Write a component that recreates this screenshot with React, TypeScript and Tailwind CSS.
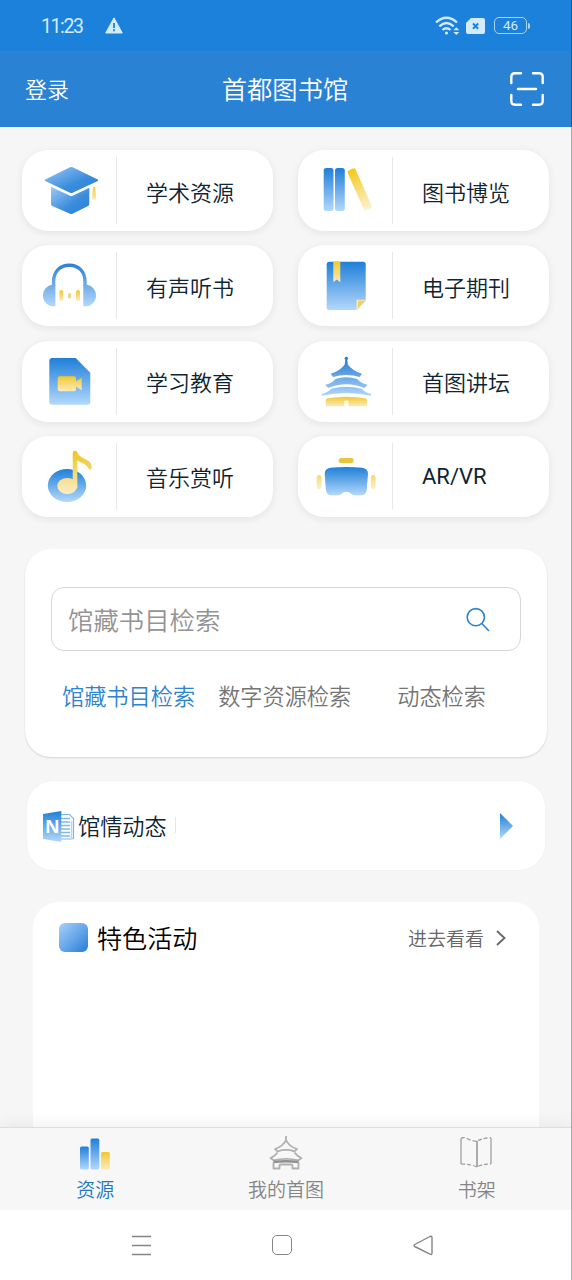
import type { ReactNode } from "react";

const Gradients = () => (
  <svg width="0" height="0" className="absolute">
    <defs>
      <linearGradient id="blue" x1="0" y1="0" x2="0" y2="1">
        <stop offset="0" stopColor="#1f7fd8" />
        <stop offset="1" stopColor="#b3d8fb" />
      </linearGradient>
      <linearGradient id="blueDown" x1="0" y1="0" x2="1" y2="1">
        <stop offset="0" stopColor="#9ccaf7" />
        <stop offset="0.6" stopColor="#3a8cdc" />
        <stop offset="1" stopColor="#2a80d6" />
      </linearGradient>
      <linearGradient id="yellow" x1="0" y1="0" x2="0" y2="1">
        <stop offset="0" stopColor="#f0c92c" />
        <stop offset="1" stopColor="#fbebc0" />
      </linearGradient>
      <linearGradient id="phones" gradientUnits="userSpaceOnUse" x1="0" y1="18" x2="0" y2="62">
        <stop offset="0" stopColor="#2b7fd2" />
        <stop offset="1" stopColor="#b5d9fb" />
      </linearGradient>
      <linearGradient id="tower" gradientUnits="userSpaceOnUse" x1="0" y1="16" x2="0" y2="56">
        <stop offset="0" stopColor="#1f78d0" />
        <stop offset="1" stopColor="#b5d9fb" />
      </linearGradient>
      <linearGradient id="note" gradientUnits="userSpaceOnUse" x1="0" y1="15" x2="0" y2="58">
        <stop offset="0" stopColor="#ecc420" />
        <stop offset="1" stopColor="#fbedc8" />
      </linearGradient>
      <linearGradient id="lean" gradientUnits="userSpaceOnUse" x1="61.800" y1="17.500" x2="61.800" y2="61">
        <stop offset="0" stopColor="#f3c81c" />
        <stop offset="1" stopColor="#fdf1d2" />
      </linearGradient>
    </defs>
  </svg>
);

const CapIcon = () => (
  <>
    <path
      d="M29 36.700 48 45.800q1.300.7 2.600 0L67.300 37.700V54q0 1.500-1.300 2.100L50.600 63.700q-1.300.6-2.600 0L30.300 56q-1.300-.6-1.300-2z"
      fill="url(#blueDown)"
    />
    <path
      d="M23.200 29.600 48 17.200q1.300-.6 2.600 0L75.800 29.600q1 .7 0 1.300L50.600 42.800q-1.300.6-2.600 0L23.200 30.900q-1-.6 0-1.300z"
      fill="url(#blueDown)"
    />
    <path d="M71.200 36.700h1.600l1.200 8v4q0 1.300-1.900 1.300t-1.900-1.300v-4z" fill="url(#yellow)" />
  </>
);

const BooksIcon = () => (
  <>
    <rect x="25.700" y="18" width="9.800" height="43" rx="2.500" fill="url(#blue)" />
    <rect x="37" y="18" width="9.800" height="43" rx="2.500" fill="url(#blue)" />
    <rect
      x="57.500"
      y="17.500"
      width="8.600"
      height="43.500"
      rx="2.200"
      transform="rotate(-24 61.800 39.500)"
      fill="url(#lean)"
    />
  </>
);

const HeadphonesIcon = () => (
  <>
    <path d="M31.600 41V36.500C31.600 26.500 38 20.200 47.300 20.200S63 26.500 63 36.500V41" fill="none" stroke="url(#phones)" strokeWidth="3.400" />
    <path d="M33.400 61.300H31.500A10.600 10.800 0 0 1 30 39.800H33.400zM61.300 61.300H63.500A10.600 10.800 0 0 0 65 39.800H61.300z" fill="url(#phones)" />
    <rect x="37.300" y="45" width="4" height="11" rx="2" fill="url(#yellow)" />
    <rect x="46" y="48" width="3.200" height="5.500" rx="1.600" fill="#efd883" />
    <rect x="54" y="45" width="4" height="11" rx="2" fill="url(#yellow)" />
  </>
);

const JournalIcon = () => (
  <>
    <path d="M31.200 16.800H65.200q2.500 0 2.500 2.500V55.500L59 65H31.200q-2.500 0-2.500-2.500V19.300q0-2.500 2.500-2.500z" fill="url(#blue)" />
    <path d="M35.300 16.800h7V37.300l-3.500-2.800L35.300 37.300z" fill="url(#yellow)" />
    <path d="M58.500 54.800h9.500L58.500 65z" fill="#f8e9b5" />
    <path d="M60 56.800q0-1 1-1h6.500L60 63.500z" fill="#efd06a" />
  </>
);

const VideoFileIcon = () => (
  <>
    <path d="M30.300 17H53.700L68.300 31.700V60.700q0 3-3 3h-35q-3 0-3-3V20q0-3 3-3z" fill="url(#blue)" />
    <rect x="35.700" y="35.300" width="18.300" height="15" rx="2" fill="url(#yellow)" />
    <path d="M53.500 40.500 59.700 36.700V49.300L53.500 45.300z" fill="url(#yellow)" />
  </>
);

const TempleIcon = () => (
  <>
    <circle cx="48.300" cy="17.300" r="1.600" fill="url(#tower)" />
    <path d="M47.500 17h1.600l.7 6.500q4.500 6.400 14.200 9.200l-2.300 3.300q-6.700-2-13.400-2t-13.300 2l-2.300-3.300q9.600-2.800 14-9.200z" fill="url(#tower)" />
    <path d="M37.500 38q5-1.800 10.800-1.800T59.200 38q3.800 4.500 10.400 5.800l-3 3.300q-9-3.900-18.300-3.900t-18.200 3.900l-2.900-3.300q6.500-1.300 10.300-5.800z" fill="url(#tower)" />
    <path d="M33.300 47.700q7-2 15-2t15.200 2q4 4.200 9.500 5v2q-12-2.800-24.700-2.800T23.800 54.700v-2q5.500-.8 9.500-5z" fill="url(#tower)" />
    <path d="M29.500 57.200q9-1.500 18.800-1.500t18.900 1.500q1.800.5 1.800 2v6.100H50.300v-5.500h-3.800v5.500H27.700v-6.100q0-1.500 1.800-2z" fill="url(#yellow)" />
  </>
);

const MusicIcon = () => (
  <>
    <ellipse cx="45" cy="49.500" rx="19.200" ry="16.500" fill="url(#blue)" />
    <ellipse cx="45.300" cy="50" rx="10" ry="8" fill="url(#note)" />
    <path
      d="M50.700 52V17q0-2.200 2.100-2.200t2.700 2q.7 2.600 5.500 5.200c5.500 2.600 8.500 4.500 8.700 9q0 2.700-1.500 2.700t-2-1.700q-1.700-3.400-6.700-5.200-2.800-1.200-4.200-2.600V52z"
      fill="url(#note)"
    />
  </>
);

const VrIcon = () => (
  <>
    <rect x="40.700" y="22" width="15" height="5" rx="2.500" fill="#e8c63a" />
    <path
      d="M32.500 31.800q15.800-1.600 31.700 0 5.800.7 5.800 6.200l-1.300 15.800q-.5 5.500-5.500 5.500h-6.500q-2.700 0-4-1.800-1.500-1.700-4.400-1.700t-4.400 1.700q-1.300 1.800-4 1.800h-6.500q-5 0-5.500-5.500L26.700 38q0-5.500 5.800-6.200z"
      fill="url(#blue)"
    />
    <rect x="18.700" y="39" width="4.800" height="14.500" rx="2.400" fill="url(#yellow)" opacity="0.700" />
    <rect x="72.800" y="39" width="4.800" height="14.500" rx="2.400" fill="url(#yellow)" opacity="0.700" />
  </>
);

const categories = [
  { name: "学术资源", icon: <CapIcon /> },
  { name: "图书博览", icon: <BooksIcon /> },
  { name: "有声听书", icon: <HeadphonesIcon /> },
  { name: "电子期刊", icon: <JournalIcon /> },
  { name: "学习教育", icon: <VideoFileIcon /> },
  { name: "首图讲坛", icon: <TempleIcon /> },
  { name: "音乐赏听", icon: <MusicIcon /> },
  { name: "AR/VR", icon: <VrIcon />, latin: true },
];

const CategoryTile = ({ name, icon, latin }: { name: string; icon: ReactNode; latin?: boolean }) => (
  <button className="flex h-[81px] items-center rounded-[26px] bg-white text-left shadow-[0_2px_8px_rgba(0,0,0,0.08)]">
    <svg width="94" height="81" viewBox="0 0 94 81" className="shrink-0">
      {icon}
    </svg>
    <span className="h-[67px] w-px bg-[#e8e8e8]" />
    <span
      className={
        latin
          ? "pt-0.5 pl-[29px] font-[Roboto,sans-serif] text-[22px] leading-8 font-normal text-[#0d2433]"
          : "pl-[29px] text-[22px] leading-8 text-[#0d2433]"
      }
    >
      {name}
    </span>
  </button>
);

const StatusBar = () => (
  <div className="flex h-[51px] items-center bg-[#1c81da] pr-[42px] pl-[41px] text-[#d3ebfd]">
    <span className="w-[42px] pt-0.5 font-[Roboto] text-[19.500px] leading-6 font-normal tracking-[-1.400px] whitespace-nowrap">11:23</span>
    <svg width="18" height="17" viewBox="0 0 18 17" className="ml-[22px]">
      <path d="M9 .8 17.300 16H.7z" fill="currentColor" stroke="currentColor" strokeLinejoin="round" />
      <path d="M9 6v5M9 12.300v2" stroke="#1c81da" strokeWidth="1.800" />
    </svg>
    <div className="ml-auto flex items-center">
      <svg width="25" height="20" viewBox="0 0 25 20" fill="none" stroke="currentColor" strokeWidth="2.300">
        <path d="M1 6.500Q11.500-3 22 6.500M4.300 10.300q7.200-6.500 14.400 0M7.500 14q4-3.500 8 0" />
        <circle cx="11.500" cy="17" r="1.600" fill="currentColor" stroke="none" />
        <path d="m18.300 14.300 3-3 3 3zM18.300 16l3 3 3-3z" fill="currentColor" stroke="none" />
      </svg>
      <svg width="19" height="16" viewBox="0 0 19 16" className="ml-1.5">
        <path d="M5 0h12q2 0 2 2v12q0 2-2 2H2q-2 0-2-2V5z" fill="currentColor" />
        <path d="m7 5.500 5.200 5.200M12.200 5.500 7 10.700" stroke="#1c81da" strokeWidth="2" />
      </svg>
      <span className="ml-[9px] flex h-[17px] w-[33px] items-center justify-center rounded-[5px] border-[1.500px] border-[#a9d4f7] font-[Roboto] text-[13.500px] leading-none font-normal">
        46
      </span>
      <span className="ml-px h-[6px] w-[2px] rounded-r bg-[#a9d4f7]" />
    </div>
  </div>
);

const Header = () => (
  <header className="grid h-[76px] grid-cols-3 items-center bg-[#2a82d4] pr-[27px] pl-[25px] text-white">
    <span className="pb-0.5 text-[22px]">登录</span>
    <h1 className="text-center text-[25.300px] whitespace-nowrap">首都图书馆</h1>
    <svg
      width="36"
      height="36"
      viewBox="0 0 36 36"
      className="justify-self-end"
      fill="none"
      stroke="currentColor"
      strokeWidth="2.400"
      strokeLinecap="round"
    >
      <path d="M2.300 12V6q0-3.700 3.700-3.700h6M24 2.300h6q3.700 0 3.700 3.700v6M33.700 24v6q0 3.700-3.700 3.700h-6M12 33.700H6Q2.300 33.700 2.300 30v-6M9 18h18" />
    </svg>
  </header>
);

const SearchCard = () => (
  <section className="mx-[25px] mt-8 h-[208px] rounded-[26px] bg-white px-[26px] pt-[38px] shadow-[0_1px_2px_rgba(0,0,0,0.14)]">
    <div className="flex h-16 items-center justify-between rounded-[13px] border border-[#d6d6d6] pr-[30px] pl-4">
      <span className="text-[25.400px] text-[#939393]">馆藏书目检索</span>
      <svg width="24" height="25" viewBox="0 0 24 25" fill="none" stroke="#2c84cf" strokeWidth="1.600" className="mt-px">
        <circle cx="9.800" cy="10.200" r="8.600" />
        <path d="m15.800 16.500 7.200 7.500" />
      </svg>
    </div>
    <div className="mt-7 flex pl-[11px] text-[22.200px] text-[#757575]">
      <span className="text-[#2c84cf]">馆藏书目检索</span>
      <span className="ml-[23px]">数字资源检索</span>
      <span className="ml-[46px]">动态检索</span>
    </div>
  </section>
);

const NewsCard = () => (
  <section className="mx-[27px] mt-6 flex h-[89px] items-center rounded-[26px] bg-white pr-8 pl-4 shadow-[0_0_2px_rgba(0,0,0,0.05)]">
    <div className="relative mt-[3px] h-8 w-8">
      <svg width="32" height="32" viewBox="0 0 32 32">
        <path d="M18 3.500h8.500l4 4V26.500q0 1.500-1.500 1.500H18" fill="#fff" stroke="#7fb7ec" strokeWidth="1.200" />
        <path d="M18 7.500h9M18 11h9M18 14.500h9M18 18h9M18 21.500h9M18 25h9" stroke="#82b9ec" strokeWidth="1.500" />
        <path d="M28.500 10v17" stroke="#b5d5f3" strokeWidth="1.500" />
        <path d="M0 3 18.300 0v31L0 28z" fill="url(#blue)" />
      </svg>
      <span className="absolute top-[5px] left-[2px] font-['Noto_Sans'] text-[18px] leading-5 font-bold text-white">N</span>
    </div>
    <span className="ml-[3px] text-[22.200px] text-[#0d2433]">馆情动态</span>
    <span className="ml-2 h-4 w-px bg-[#e6e6e6]" />
    <svg width="13" height="26" viewBox="0 0 13 26" className="mt-px ml-auto">
      <path d="M0 0 13 13 0 26z" fill="url(#blue)" />
    </svg>
  </section>
);

const ActivityCard = () => (
  <section className="mx-[33px] mt-8 min-h-0 flex-1 rounded-t-[26px] bg-white px-[26px] pt-[17px]">
    <div className="flex items-center">
      <span className="h-[29px] w-[29px] rounded-md bg-linear-to-br from-[#a9d1f8] to-[#1c7cd8]" />
      <h2 className="ml-[9px] text-[25.100px] text-black">特色活动</h2>
      <span className="ml-auto pt-0.5 text-[19px] text-[#666]">进去看看</span>
      <svg
        width="10"
        height="16"
        viewBox="0 0 10 16"
        className="mt-px mr-[7px] ml-3"
        fill="none"
        stroke="#6a6a6a"
        strokeWidth="1.900"
      >
        <path d="m1 1 7.500 7L1 15" />
      </svg>
    </div>
  </section>
);

const tabs = [
  {
    name: "资源",
    icon: (
      <>
        <rect x="3" y="10.500" width="8.800" height="23" rx="1.500" fill="url(#blue)" />
        <rect x="13.500" y="2.500" width="8.800" height="31" rx="1.500" fill="url(#blue)" />
        <rect x="24" y="16" width="8.800" height="17.500" rx="1.500" fill="url(#yellow)" />
      </>
    ),
  },
  {
    name: "我的首图",
    icon: (
      <g fill="none" stroke="#b0b0b0" strokeWidth="1.800" strokeLinejoin="round">
        <path d="M18 0v4" />
        <path d="M18 4q-2.500 6-11 9l2.500 2.300q8.500-2.700 17 0l2.500-2.300Q20.500 10 18 4z" />
        <path d="M9.500 16.500q-3 4-7 5.500l3 2.300q12.500-3 25 0l3-2.300q-4-1.500-7-5.500" />
        <path d="M5.500 26q12.500-1.600 25 0" strokeWidth="2.400" stroke="#8f8f8f" />
        <path d="M5.500 26v6.500h6V29.500q0-1 1-1h11q1 0 1 1v3h6V26" />
      </g>
    ),
  },
  {
    name: "书架",
    icon: (
      <g fill="none" stroke="#999" strokeWidth="1.200">
        <path d="M2 2.500v25.500M32 2v26" />
        <path d="M18 5v26" strokeWidth="1.600" />
        <path d="M2 2.500q2.500-2 7 .5t9 2Q22 2.500 32 1.500M2 28q9.500 0 16 3 4-3 14-3" strokeDasharray="4 2" />
      </g>
    ),
  },
];

const TabBar = () => (
  <nav className="relative grid h-[83px] shrink-0 grid-cols-3 border-t border-[#dedede] bg-[#f7f7f7] shadow-[0_-3px_16px_rgba(0,0,0,0.06)]">
    {tabs.map((tab, idx) => (
      <div
        key={tab.name}
        className={
          idx === 0
            ? "flex flex-col items-center pt-2 text-[#1c78bd]"
            : "flex flex-col items-center pt-2 text-[#858585]"
        }
      >
        <svg width="36" height="36" viewBox="0 0 36 36">
          {tab.icon}
        </svg>
        <span className="mt-[3px] text-[19px] leading-7">{tab.name}</span>
      </div>
    ))}
  </nav>
);

const SystemNav = () => (
  <div className="relative flex h-[70px] shrink-0 items-center justify-between bg-white pr-[138px] pl-[131px]">
    <svg width="21" height="21" viewBox="0 0 21 21" stroke="#858585" strokeWidth="1.500">
      <path d="M1 1.500h19M1 10.500h19M1 19.500h19" />
    </svg>
    <span className="mr-px h-5 w-5 rounded-[5px] border-[1.500px] border-[#858585]" />
    <svg width="21" height="21" viewBox="0 0 21 21" fill="none" stroke="#858585" strokeWidth="1.400" strokeLinejoin="round">
      <path d="M1.700 9.500 17 1.500q2-.8 2 1.200V18q0 2-2 1.200L1.700 11.500q-1.300-1 0-2z" />
    </svg>
  </div>
);

const App = () => {
  return (
    <div className="relative flex h-[1280px] w-[572px] flex-col overflow-hidden bg-[#f6f6f6] font-['Noto_Sans_CJK_SC',sans-serif] font-[350]">
      <Gradients />
      <StatusBar />
      <Header />
      <main className="flex min-h-0 flex-1 flex-col">
        <div className="mt-[23px] mr-[23px] ml-[22px] grid grid-cols-2 gap-x-[25px] gap-y-[14.300px]">
          {categories.map((cat) => (
            <CategoryTile key={cat.name} name={cat.name} icon={cat.icon} latin={cat.latin} />
          ))}
        </div>
        <SearchCard />
        <NewsCard />
        <ActivityCard />
      </main>
      <TabBar />
      <SystemNav />
      <div className="absolute inset-y-0 right-0 w-px bg-black/30" />
    </div>
  );
};

export default App;
